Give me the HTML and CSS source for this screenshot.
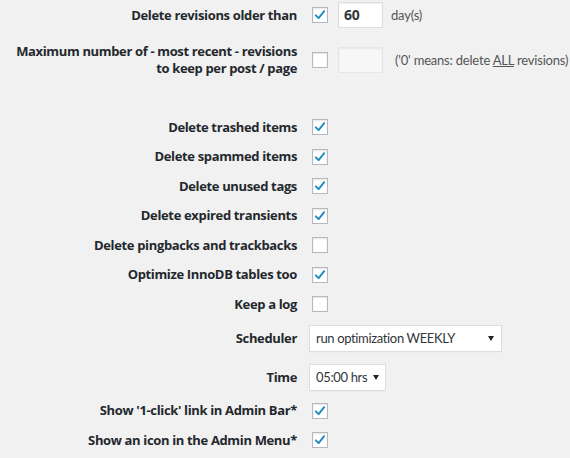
FILE: index.html
```html
<!DOCTYPE html>
<html>
<head>
<meta charset="utf-8">
<link rel="stylesheet" href="styles.css">
</head>
<body>
<svg width="0" height="0" class="defs">
  <symbol id="tick" viewBox="0 0 16 16">
    <path d="M3.2 8.4 L6.4 11.6 L12.8 3.6" fill="none" stroke="#1e8cbe" stroke-width="2.2" stroke-linecap="round" stroke-linejoin="round"/>
  </symbol>
</svg>
<div class="form">
  <div class="row r1">
    <div class="label">Delete revisions older than</div>
    <div class="ctl">
      <span class="cb"><svg><use href="#tick"/></svg></span>
      <span class="num">60</span>
      <span class="note n1">day(s)</span>
    </div>
  </div>
  <div class="row r2">
    <div class="label">Maximum number of - most recent - revisions<br>to keep per post / page</div>
    <div class="ctl">
      <span class="cb"></span>
      <span class="num disabled"></span>
      <span class="note n2">('0' means: delete <u>ALL</u> revisions)</span>
    </div>
  </div>
  <div class="spacer"></div>
  <div class="row rc"><div class="label">Delete trashed items</div><div class="ctl"><span class="cb"><svg><use href="#tick"/></svg></span></div></div>
  <div class="row rc"><div class="label">Delete spammed items</div><div class="ctl"><span class="cb"><svg><use href="#tick"/></svg></span></div></div>
  <div class="row rc"><div class="label">Delete unused tags</div><div class="ctl"><span class="cb"><svg><use href="#tick"/></svg></span></div></div>
  <div class="row rc"><div class="label">Delete expired transients</div><div class="ctl"><span class="cb"><svg><use href="#tick"/></svg></span></div></div>
  <div class="row rc"><div class="label">Delete pingbacks and trackbacks</div><div class="ctl"><span class="cb"></span></div></div>
  <div class="row rc"><div class="label">Optimize InnoDB tables too</div><div class="ctl"><span class="cb"><svg><use href="#tick"/></svg></span></div></div>
  <div class="row rc"><div class="label">Keep a log</div><div class="ctl"><span class="cb"></span></div></div>
  <div class="row rs"><div class="label">Scheduler</div><div class="ctl"><span class="select wide">run optimization WEEKLY<span class="arrow"></span></span></div></div>
  <div class="row rt"><div class="label">Time</div><div class="ctl"><span class="select narrow">05:00 hrs<span class="arrow"></span></span></div></div>
  <div class="row rc"><div class="label">Show '1-click' link in Admin Bar*</div><div class="ctl"><span class="cb"><svg><use href="#tick"/></svg></span></div></div>
  <div class="row rc"><div class="label">Show an icon in the Admin Menu*</div><div class="ctl"><span class="cb"><svg><use href="#tick"/></svg></span></div></div>
</div>
</body>
</html>
```
FILE: styles.css
```css
html, body {
  margin: 0;
  padding: 0;
  background: #f1f1f1;
}
body {
  font-family: Lato, "Open Sans", sans-serif;
  font-size: 13px;
  color: #444;
  overflow: hidden;
}
.defs { position: absolute; }
.form {
  display: flex;
  flex-direction: column;
}
.row {
  display: grid;
  grid-template-columns: 297px 1fr;
  column-gap: 12px;
  align-items: center;
}
.r1 { height: 30px; }
.r2 { height: 60px; }
.spacer { height: 22.5px; }
.rc { height: 29.5px; }
.rs { height: 39px; }
.rt { height: 38px; }
.label {
  font-family: "Open Sans", "Noto Sans", sans-serif;
  text-align: right;
  font-weight: 700;
  color: #23282d;
  line-height: 17px;
  letter-spacing: -0.35px;
}
.ctl {
  display: flex;
  align-items: center;
  white-space: nowrap;
}
.cb {
  width: 16px;
  height: 16px;
  box-sizing: border-box;
  border: 1px solid #b4b9be;
  background: #fff;
  box-shadow: inset 0 1px 2px rgba(0,0,0,0.1);
  margin-left: 3px;
  display: inline-flex;
  flex: none;
}
.cb svg {
  width: 14px;
  height: 14px;
}
.num {
  box-sizing: border-box;
  width: 45px;
  height: 26px;
  margin-left: 10px;
  border: 1px solid #ddd;
  background: #fff;
  box-shadow: inset 0 1px 2px rgba(0,0,0,0.07);
  font-family: "Open Sans", sans-serif;
  font-weight: 700;
  font-size: 14px;
  letter-spacing: -0.3px;
  color: #32373c;
  padding-left: 5px;
  line-height: 24px;
  flex: none;
}
.num.disabled {
  background: #f7f7f7;
  border-color: #e5e5e5;
}
.note { color: #555; letter-spacing: -0.2px; }
.n1 { margin-left: 8px; }
.n2 { margin-left: 12px; }
.select {
  position: relative;
  box-sizing: border-box;
  height: 27px;
  border: 1px solid #ddd;
  background: #fff;
  box-shadow: 0 1px 1px -1px rgba(0,0,0,0.1);
  color: #32373c;
  letter-spacing: -0.35px;
  line-height: 25px;
  padding-left: 6px;
}
.wide { width: 193px; }
.narrow { width: 77px; }
.arrow {
  position: absolute;
  right: 7px;
  top: 10px;
  width: 0;
  height: 0;
  border-left: 3.5px solid transparent;
  border-right: 3.5px solid transparent;
  border-top: 5px solid #222;
}
.narrow .arrow { right: 6px; }
```
